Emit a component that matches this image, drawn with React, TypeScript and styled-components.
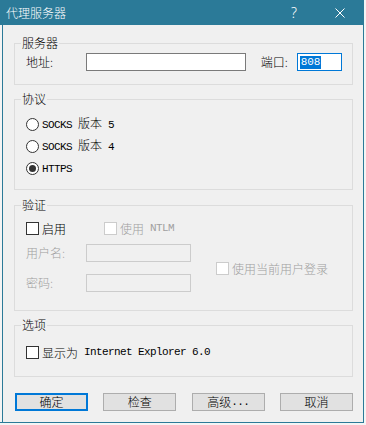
import React from 'react';
import styled, { createGlobalStyle } from 'styled-components';

const TEAL = '#2b7a98';
const DISABLED = '#a0a0a0';

const GlobalStyle = createGlobalStyle`
  html, body { margin: 0; padding: 0; background: #f4f4f4; }
  body {
    font-family: "Noto Sans CJK SC", "Noto Sans", sans-serif;
    font-size: 12px;
    font-weight: 300;
    color: #000;
  }
  #root { width: 366px; height: 425px; overflow: hidden; }
`;

const Page = styled.div`
  width: 366px;
  height: 425px;
  background: #f4f4f4;
`;

const Window = styled.div`
  box-sizing: border-box;
  width: 364px;
  height: 423px;
  border-right: 1px solid ${TEAL};
  border-bottom: 1px solid ${TEAL};
  display: flex;
  flex-direction: column;
`;

const TitleBar = styled.div`
  height: 25px;
  flex: none;
  background: ${TEAL};
  display: flex;
  align-items: center;
  color: #fff;
`;

const Title = styled.div`
  flex: 1;
  padding-left: 6px;
  font-size: 12px;
  line-height: 25px;
`;

const TitleButton = styled.div`
  width: 46px;
  height: 25px;
  display: flex;
  align-items: center;
  justify-content: center;
  font-family: "Noto Sans", sans-serif;
  font-size: 14px;
  color: #fff;
`;

const Body = styled.div`
  flex: 1;
  margin-left: 2px;
  border-left: 1px solid ${TEAL};
  background: #f0f0f0;
  padding: 10px 10px 0 11px;
  display: flex;
  flex-direction: column;
  gap: 6px;
`;

const Group = styled.fieldset<{ $pt: number; $pb: number; $mt?: number }>`
  margin: ${p => p.$mt ?? 0}px 0 0 0;
  min-width: 0;
  border: 1px solid #dcdcdc;
  padding: ${p => p.$pt}px 10px ${p => p.$pb}px 11px;
`;

const Legend = styled.legend`
  padding: 0 1px;
  margin-left: -5px;
  font-size: 12px;
  line-height: 16px;
  color: #000;
`;

const Mono = styled.span`
  font-family: "Liberation Mono", monospace;
  font-weight: 400;
  font-size: 11px;
  letter-spacing: -0.6px;
  white-space: pre;
`;

const Row = styled.div<{ $h?: number }>`
  display: flex;
  align-items: center;
  height: ${p => p.$h ?? 16}px;
`;

const Label = styled.span<{ $w?: number; $disabled?: boolean }>`
  width: ${p => (p.$w ? `${p.$w}px` : 'auto')};
  flex: none;
  color: ${p => (p.$disabled ? DISABLED : '#000')};
  white-space: pre;
  line-height: 16px;
`;

const Field = styled.div<{ $w: number; $variant?: 'normal' | 'focus' | 'disabled'; $ml?: number }>`
  box-sizing: border-box;
  width: ${p => p.$w}px;
  height: 18px;
  margin-left: ${p => p.$ml ?? 0}px;
  border: 1px solid
    ${p => (p.$variant === 'focus' ? '#0078d7' : p.$variant === 'disabled' ? '#cccccc' : '#7a7a7a')};
  background: ${p => (p.$variant === 'disabled' ? '#f0f0f0' : '#fff')};
  display: flex;
  align-items: center;
  padding-left: 2px;
`;

const Selected = styled.span`
  background: #0078d7;
  color: #fff;
  font-family: "Liberation Mono", monospace;
  font-size: 11px;
  line-height: 13px;
  padding: 0 1px;
`;

const RadioList = styled.div`
  display: flex;
  flex-direction: column;
  gap: 6px;
`;

const RadioCircle = styled.span<{ $checked?: boolean }>`
  box-sizing: border-box;
  width: 13px;
  height: 13px;
  flex: none;
  border: 1px solid #333;
  border-radius: 50%;
  background: #fff;
  display: inline-flex;
  align-items: center;
  justify-content: center;
  margin-right: 3px;
  &::after {
    content: '';
    width: 7px;
    height: 7px;
    border-radius: 50%;
    background: #333;
    display: ${p => (p.$checked ? 'block' : 'none')};
  }
`;

const CheckBox = styled.span<{ $disabled?: boolean }>`
  box-sizing: border-box;
  width: 13px;
  height: 13px;
  flex: none;
  border: 1px solid ${p => (p.$disabled ? '#cccccc' : '#333')};
  background: #fff;
  margin-right: 3px;
`;

const CheckItem = styled.div<{ $w?: number; $disabled?: boolean; $ml?: number }>`
  display: flex;
  align-items: center;
  height: 16px;
  width: ${p => (p.$w ? `${p.$w}px` : 'auto')};
  margin-left: ${p => p.$ml ?? 0}px;
  color: ${p => (p.$disabled ? DISABLED : '#000')};
  white-space: pre;
`;

const AuthGrid = styled.div`
  display: flex;
  align-items: center;
  margin-top: 8px;
`;

const AuthFields = styled.div`
  display: flex;
  flex-direction: column;
  gap: 12px;
`;

const ButtonRow = styled.div`
  display: flex;
  justify-content: space-between;
  margin-top: 10px;
  padding-left: 1px;
`;

const Button = styled.div<{ $default?: boolean }>`
  box-sizing: border-box;
  width: 73px;
  height: 18px;
  background: #e1e1e1;
  border: ${p => (p.$default ? '2px solid #0078d7' : '1px solid #adadad')};
  display: flex;
  align-items: center;
  justify-content: center;
  font-size: 12px;
  line-height: 16px;
  white-space: pre;
`;

const CloseIcon = () => (
  <svg width="10" height="10" viewBox="0 0 10 10">
    <path d="M0.5 0.5 L9.5 9.5 M9.5 0.5 L0.5 9.5" stroke="#fff" strokeWidth="1" fill="none" />
  </svg>
);

export default function App() {
  return (
    <Page>
      <GlobalStyle />
      <Window>
        <TitleBar>
          <Title>代理服务器</Title>
          <TitleButton>?</TitleButton>
          <TitleButton>
            <CloseIcon />
          </TitleButton>
        </TitleBar>
        <Body>
          <Group $pt={2} $pb={13}>
            <Legend>服务器</Legend>
            <Row $h={18}>
              <Label $w={60}>地址:</Label>
              <Field $w={162} />
              <Label $w={36} style={{ marginLeft: 15 }}>端口:</Label>
              <Field $w={46} $variant="focus">
                <Selected>808</Selected>
              </Field>
            </Row>
          </Group>

          <Group $pt={9} $pb={13}>
            <Legend>协议</Legend>
            <RadioList>
              <Row>
                <RadioCircle />
                <Label>
                  <Mono>SOCKS </Mono>版本<Mono> 5</Mono>
                </Label>
              </Row>
              <Row>
                <RadioCircle />
                <Label>
                  <Mono>SOCKS </Mono>版本<Mono> 4</Mono>
                </Label>
              </Row>
              <Row>
                <RadioCircle $checked />
                <Label>
                  <Mono>HTTPS</Mono>
                </Label>
              </Row>
            </RadioList>
          </Group>

          <Group $pt={7} $pb={18} $mt={1}>
            <Legend>验证</Legend>
            <Row>
              <CheckItem $w={78}>
                <CheckBox />
                启用
              </CheckItem>
              <CheckItem $disabled>
                <CheckBox $disabled />
                使用<Mono> NTLM</Mono>
              </CheckItem>
            </Row>
            <AuthGrid>
              <AuthFields>
                <Row $h={18}>
                  <Label $w={60} $disabled>用户名:</Label>
                  <Field $w={105} $variant="disabled" />
                </Row>
                <Row $h={18}>
                  <Label $w={60} $disabled>密码:</Label>
                  <Field $w={105} $variant="disabled" />
                </Row>
              </AuthFields>
              <CheckItem $disabled $ml={25}>
                <CheckBox $disabled />
                使用当前用户登录
              </CheckItem>
            </AuthGrid>
          </Group>

          <Group $pt={11} $pb={16}>
            <Legend>选项</Legend>
            <CheckItem>
              <CheckBox />
              显示为<Mono> Internet Explorer 6.0</Mono>
            </CheckItem>
          </Group>

          <ButtonRow>
            <Button $default>确定</Button>
            <Button>检查</Button>
            <Button>
              高级<Mono>...</Mono>
            </Button>
            <Button>取消</Button>
          </ButtonRow>
        </Body>
      </Window>
    </Page>
  );
}
